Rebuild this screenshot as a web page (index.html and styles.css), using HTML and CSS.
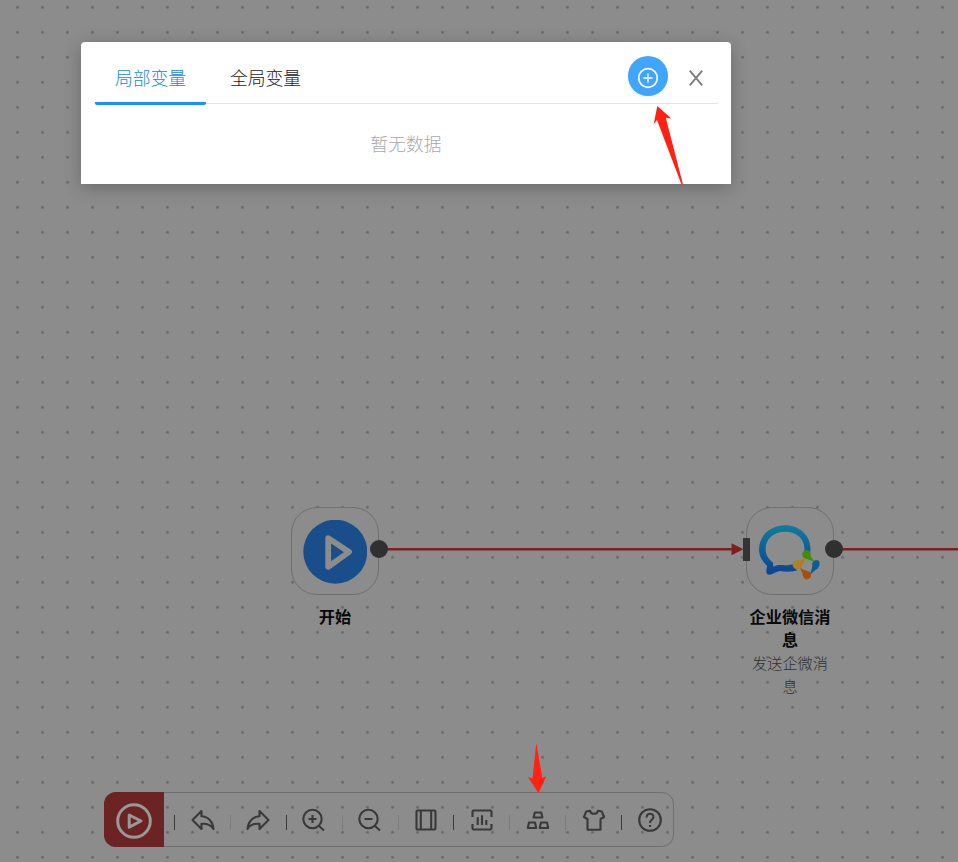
FILE: index.html
```html
<!DOCTYPE html>
<html lang="zh-CN">
<head>
<meta charset="utf-8">
<title>流程设计</title>
<link rel="stylesheet" href="styles.css">
</head>
<body>
<main class="canvas">
  <svg class="edges" viewBox="0 0 958 862">
    <path class="edge" d="M379 549.3H732M834 549.3H958"/>
    <path class="edge-head" d="M731.5 543.3L743.5 549.3L731.5 555.3Z"/>
  </svg>

  <section class="node node-start">
    <div class="tile">
      <svg width="64" height="64" viewBox="0 0 64 64"><circle cx="32.3" cy="31.7" r="32" fill="#194e8b"/><path d="M25.200 18.200L46 32L25.200 46.800Z" fill="none" stroke="#8c8c8c" stroke-width="5.800" stroke-linejoin="round"/></svg>
      <i class="port"></i>
    </div>
    <h3>开始</h3>
  </section>

  <section class="node node-message">
    <div class="tile">
      <svg class="wecom" width="64" height="60" viewBox="0 0 64 60">
        <defs>
          <linearGradient id="bubble" x1="0" y1="0" x2="0" y2="1"><stop offset="0" stop-color="#127c9d"/><stop offset=".45" stop-color="#0d629a"/><stop offset="1" stop-color="#0c438f"/></linearGradient>
          <linearGradient id="gold" x1="0" y1="0" x2="1" y2="0"><stop offset="0" stop-color="#a7862d"/><stop offset="1" stop-color="#ad7b1b"/></linearGradient>
        </defs>
        <path fill="url(#bubble)" fill-rule="evenodd" d="M27 3.300C41.500 3.300 52.500 13.500 52.500 27C52.500 30 52 31.500 51.500 33C49 30.500 46.500 31 45.500 33C46 31 46.500 29 46.500 27C46.500 17 38.500 9.800 27 9.800C16 9.800 7.600 17 7.600 27C7.600 33 10.500 37 15 40.500L15.300 44.800C18 43 21.500 42.800 27 43.300C31 43.300 34 42.500 36.500 41.500C35 44.500 36.500 47 39.500 48C36 49.500 29.500 50.300 22 49C18 49.500 14.500 52.500 11.500 52.800C8.300 53 7.500 50.500 9.200 44C4.500 39.500 1 34.500 1 27.500C1 13.500 12.500 3.300 27 3.300Z"/>
        <path fill="#3f8d08" d="M48.500 28C52 28 53 31 52.800 34.500C53.800 37 56 38.500 58 40.500C53.500 38.500 50.500 37.500 47 36.500C43 34.500 43.500 28.500 48.500 28Z"/>
        <path fill="#0c5b91" d="M60.500 38.500C63 41 61 46.500 57.500 48C55.300 49.500 53.500 51.500 52 53.500C52.800 49 54.300 46.500 54.300 43.500C53.500 39.500 57 37.500 60.500 38.500Z"/>
        <path fill="#a84e0b" d="M41.500 45.500C44.500 47.800 47.500 48.500 51 49.500C54.500 51 53.500 56.500 49.500 57.300C46 57.300 45 55 44.800 52.500C44.300 50 43 48 41.500 45.500Z"/>
        <path fill="url(#gold)" d="M48.500 35.500C46.500 38 45 41 43.700 44.500C42 48 37.500 48.300 35.500 45.300C33.200 41.500 35.500 38 39.500 38C43 38 46 37.500 48.500 35.500Z"/>
      </svg>
      <i class="inlet"></i><i class="port"></i>
    </div>
    <h3>企业微信消息</h3>
    <p>发送企微消息</p>
  </section>

  <nav class="toolbar">
    <button class="run" aria-label="运行"><svg width="36" height="36" viewBox="0 0 36 36"><circle cx="18" cy="18" r="16.300"/><path d="M13.200 12L25 18L13.200 24.200Z"/></svg></button>
    <div class="tools">
      <button class="tool dark"><svg viewBox="0 0 24 24"><path d="M10.500 3L1.500 12L10.500 21V15.800C16 15.300 20 17 22.500 21C22 14 17.500 8.500 10.500 8.200Z"/></svg></button>
      <button class="tool"><svg viewBox="0 0 24 24"><path d="M13.500 3L22.500 12L13.500 21V15.800C8 15.300 4 17 1.500 21C2 14 6.500 8.500 13.500 8.200Z"/></svg></button>
      <button class="tool dark"><svg viewBox="0 0 24 24"><circle cx="10.500" cy="11" r="9.200"/><path d="M6.500 11h8M10.500 7v8M17 18l5 4.500"/></svg></button>
      <button class="tool"><svg viewBox="0 0 24 24"><circle cx="10.500" cy="11" r="9.200"/><path d="M6.500 11h8M17 18l5 4.500"/></svg></button>
      <button class="tool"><svg viewBox="0 0 24 24"><rect x="2.500" y="2.500" width="19" height="19" rx="1"/><path d="M6.800 3v18M17.200 3v18"/></svg></button>
      <button class="tool dark"><svg viewBox="0 0 24 24"><path d="M2.500 9V3.700q0-1.200 1.200-1.200h16.600q1.200 0 1.200 1.200V9M2.500 16v4.300q0 1.200 1.200 1.200h16.600q1.200 0 1.200-1.200V16M7.700 9.300v7.700M12 7.200v9.800M16.300 12v5"/></svg></button>
      <button class="tool"><svg viewBox="0 0 24 24"><path d="M8.800 4.500h6.400l1.200 5H7.600ZM3 14.500h6l1.200 5.500H1.800ZM15 14.500h6l1.200 5.500h-8.400Z"/></svg></button>
      <button class="tool"><svg viewBox="0 0 24 24"><path d="M8 2.700L4.200 3.600L1.900 9L5.500 11V21.700H18.500V11L22.100 9L19.800 3.600L16 2.700C15 6.800 9 6.800 8 2.700Z"/></svg></button>
      <button class="tool dark"><svg viewBox="0 0 24 24"><circle cx="12" cy="12" r="10.800"/><path d="M8.600 9.400C8.600 4.400 15.500 4.700 15.500 9C15.500 11.500 12 11.500 12 15M12 17v2"/></svg></button>
    </div>
  </nav>

  <section class="panel">
    <header class="panel-head">
      <div class="tab active">局部变量</div>
      <div class="tab">全局变量</div>
      <button class="add" aria-label="添加"><svg width="22" height="22" viewBox="0 0 22 22"><circle cx="11" cy="11" r="9.300" fill="none" stroke="#fff" stroke-width="1.700"/><path d="M6.500 11h9M11 6.500v9" stroke="#d5ecff" stroke-width="1.800"/></svg></button>
      <button class="close" aria-label="关闭"><svg width="16" height="18" viewBox="0 0 16 18"><path d="M1.800 1.700L14.200 16.300M14.200 1.700L1.800 16.300" stroke="#7c7c7c" stroke-width="1.900"/></svg></button>
    </header>
    <div class="empty">暂无数据</div>
  </section>

  <svg class="pointers" viewBox="0 0 958 862">
    <path d="M657.300 106L671.300 118.600L665.800 117.800L683 184.500H681.500L657 120L653.700 124.200Z"/>
    <path d="M536.300 743L542.300 778L546.200 776.500L538.500 793L528 777L532.500 778.500Z"/>
  </svg>
</main>
</body>
</html>
```

FILE: styles.css
```css
* { box-sizing: border-box; }
body { margin: 0; font-family: "Noto Sans CJK SC", sans-serif; }
button { border: 0; padding: 0; background: none; font: inherit; }
svg { display: block; }
.canvas {
  position: relative;
  width: 958px;
  height: 862px;
  overflow: hidden;
  background: radial-gradient(circle at 17.5px 7.3px, #686868 0, #6f6f6f 1px, #8c8c8c 2px) 0 0 / 25px 25px #8c8c8c;
}
.edges, .pointers { position: absolute; inset: 0; width: 958px; height: 862px; pointer-events: none; }
.edge { fill: none; stroke: #7c2020; stroke-width: 2.5; }
.edge-head { fill: #7c2020; }
.pointers { fill: #ff2213; }

.node { position: absolute; top: 507px; width: 88px; text-align: center; }
.node-start { left: 291px; }
.node-message { left: 746px; }
.tile {
  position: relative;
  display: grid;
  place-items: center;
  width: 88px;
  height: 88px;
  padding-top: 1px;
  border: 1px solid #707070;
  border-radius: 26px;
  background: #8c8c8c;
}
.wecom { margin-left: -1px; }
.port { position: absolute; left: 78px; top: 32.4px; width: 18px; height: 18px; border-radius: 50%; background: #303030; }
.inlet { position: absolute; left: -4px; top: 30px; width: 7px; height: 23px; background: #343434; }
.node h3 { margin: 10px 2px 0; font-size: 16.2px; line-height: 23px; font-weight: 700; color: #080808; }
.node p { margin: 0 5px; font-size: 15.2px; line-height: 22.6px; font-weight: 300; color: #303030; }

.toolbar {
  position: absolute;
  left: 104px;
  top: 792px;
  width: 570px;
  height: 55px;
  display: flex;
  border: 1px solid #6f6f6f;
  border-radius: 12px;
}
.run { flex: none; width: 60px; margin: -1px 0 -1px -1px; padding-top: 2px; display: grid; place-items: center; border-radius: 12px 0 0 12px; background: #6c2323; }
.run svg { fill: none; stroke: #999; stroke-width: 3; stroke-linejoin: round; }
.tools { flex: none; display: flex; padding-left: 10px; }
.tool { flex: none; display: flex; align-items: center; width: 55.9px; }
.tool:last-child { width: 44px; }
.tool::before { content: ""; width: 1px; height: 15px; margin-right: 15.5px; margin-top: 6px; background: #7b7b7b; }
.tool.dark::before { background: #393939; }
.tool svg { width: 24px; height: 24px; margin-top: 1px; flex: none; fill: none; stroke: #393939; stroke-width: 2.1; stroke-linejoin: round; }

.panel {
  position: absolute;
  left: 81px;
  top: 42px;
  width: 650px;
  height: 142px;
  padding: 0 13px;
  border-radius: 4px 4px 0 0;
  background: #fff;
  box-shadow: 0 4px 18px rgba(0, 0, 0, .24);
}
.panel-head { display: flex; height: 62px; padding-left: 1px; border-bottom: 1px solid #e4e4e6; }
.tab { height: 63px; width: 111px; line-height: 70px; text-align: center; font-size: 17.8px; font-weight: 300; color: #222; }
.tab + .tab { margin-left: 4px; }
.tab.active { color: #0f86fa; border-bottom: 3px solid #1890ff; border-radius: 2px; }
.add { display: grid; place-items: center; width: 40px; height: 40px; margin: 14px 0 0 auto; padding-top: 3px; border-radius: 50%; background: #40a5ff; box-shadow: 0 2px 3px rgba(0, 0, 0, .06); }
.close { margin: 27px 14px 0 20px; height: 18px; }
.empty { margin-top: 26px; line-height: 26px; text-align: center; font-size: 17.8px; font-weight: 300; color: #aaa; }
```
